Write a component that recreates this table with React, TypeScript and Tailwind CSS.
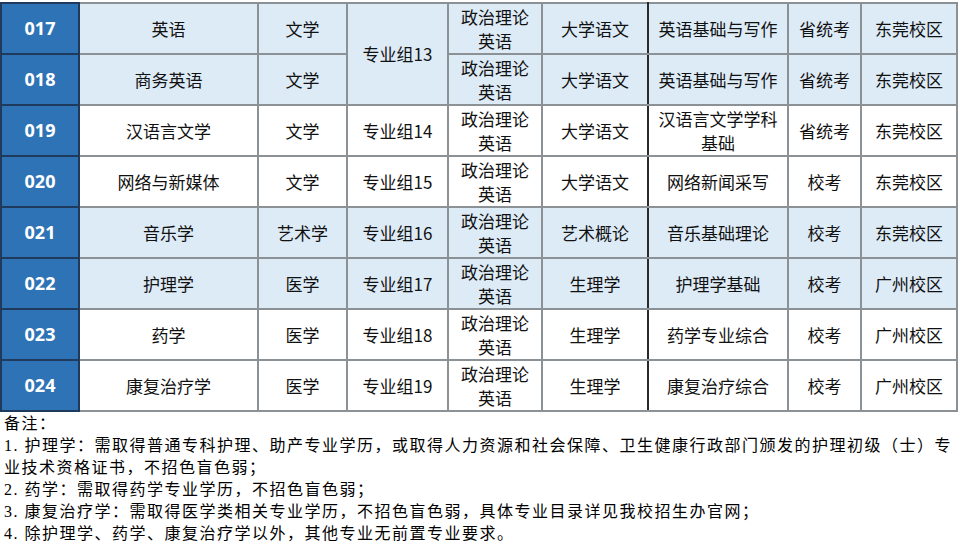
import React from "react";

type Row = {
  code: string;
  name: string;
  cat: string;
  group?: string;
  groupSpan?: number;
  exam2: string;
  exam3: React.ReactNode;
  type: string;
  campus: string;
  blue: boolean;
};

const rows: Row[] = [
  { code: "017", name: "英语", cat: "文学", group: "专业组13", groupSpan: 2, exam2: "大学语文", exam3: "英语基础与写作", type: "省统考", campus: "东莞校区", blue: true },
  { code: "018", name: "商务英语", cat: "文学", exam2: "大学语文", exam3: "英语基础与写作", type: "省统考", campus: "东莞校区", blue: true },
  { code: "019", name: "汉语言文学", cat: "文学", group: "专业组14", groupSpan: 1, exam2: "大学语文", exam3: (<>汉语言文学学科<br />基础</>), type: "省统考", campus: "东莞校区", blue: false },
  { code: "020", name: "网络与新媒体", cat: "文学", group: "专业组15", groupSpan: 1, exam2: "大学语文", exam3: "网络新闻采写", type: "校考", campus: "东莞校区", blue: false },
  { code: "021", name: "音乐学", cat: "艺术学", group: "专业组16", groupSpan: 1, exam2: "艺术概论", exam3: "音乐基础理论", type: "校考", campus: "东莞校区", blue: true },
  { code: "022", name: "护理学", cat: "医学", group: "专业组17", groupSpan: 1, exam2: "生理学", exam3: "护理学基础", type: "校考", campus: "广州校区", blue: true },
  { code: "023", name: "药学", cat: "医学", group: "专业组18", groupSpan: 1, exam2: "生理学", exam3: "药学专业综合", type: "校考", campus: "广州校区", blue: false },
  { code: "024", name: "康复治疗学", cat: "医学", group: "专业组19", groupSpan: 1, exam2: "生理学", exam3: "康复治疗综合", type: "校考", campus: "广州校区", blue: false },
];

const cell = "border-2 border-[#8c9196] text-center align-middle p-0 text-[17px] leading-[24px] text-[#111]";

export default function App() {
  return (
    <div className="w-[958px] h-[557px] bg-white overflow-hidden" style={{ fontFamily: '"Noto Sans CJK SC", "Noto Sans", sans-serif' }}>
      <div className="pt-[2px]">
        <table className="border-collapse table-fixed w-[956px]">
          <colgroup>
            <col className="w-[78px]" />
            <col className="w-[179px]" />
            <col className="w-[89px]" />
            <col className="w-[101px]" />
            <col className="w-[94px]" />
            <col className="w-[106px]" />
            <col className="w-[140px]" />
            <col className="w-[73px]" />
            <col className="w-[96px]" />
          </colgroup>
          <tbody>
            {rows.map((r) => {
              const bg = r.blue ? "bg-[#ddebf7]" : "bg-white";
              return (
                <tr key={r.code} className="h-[51px]">
                  <td
                    className="border-2 border-[#1f3a5c] bg-[#2e73b5] text-white text-center align-middle font-bold text-[18px] p-0"
                    style={{ fontFamily: '"Open Sans", "Noto Sans", sans-serif' }}
                  >
                    {r.code}
                  </td>
                  <td className={`${cell} ${bg}`}>{r.name}</td>
                  <td className={`${cell} ${bg}`}>{r.cat}</td>
                  {r.group && (
                    <td className={`${cell} ${bg}`} rowSpan={r.groupSpan}>
                      {r.group}
                    </td>
                  )}
                  <td className={`${cell} ${bg}`}>
                    政治理论
                    <br />
                    英语
                  </td>
                  <td className={`${cell} ${bg} border-r-[#2a2a2a]`}>{r.exam2}</td>
                  <td className={`${cell} ${bg}`}>{r.exam3}</td>
                  <td className={`${cell} ${bg}`}>{r.type}</td>
                  <td className={`${cell} ${bg}`}>{r.campus}</td>
                </tr>
              );
            })}
          </tbody>
        </table>
      </div>
      <div
        className="pl-[4px] pt-[1px] text-[16px] leading-[22px] tracking-[1.5px] text-black whitespace-nowrap border-b border-[#e5e5e5] pb-[12px]"
        style={{ fontFamily: '"Liberation Serif", "Noto Sans CJK SC", serif' }}
      >
        <div>备注：</div>
        <div>1. 护理学：需取得普通专科护理、助产专业学历，或取得人力资源和社会保障、卫生健康行政部门颁发的护理初级（士）专</div>
        <div>业技术资格证书，不招色盲色弱；</div>
        <div>2. 药学：需取得药学专业学历，不招色盲色弱；</div>
        <div>3. 康复治疗学：需取得医学类相关专业学历，不招色盲色弱，具体专业目录详见我校招生办官网；</div>
        <div>4. 除护理学、药学、康复治疗学以外，其他专业无前置专业要求。</div>
      </div>
    </div>
  );
}
